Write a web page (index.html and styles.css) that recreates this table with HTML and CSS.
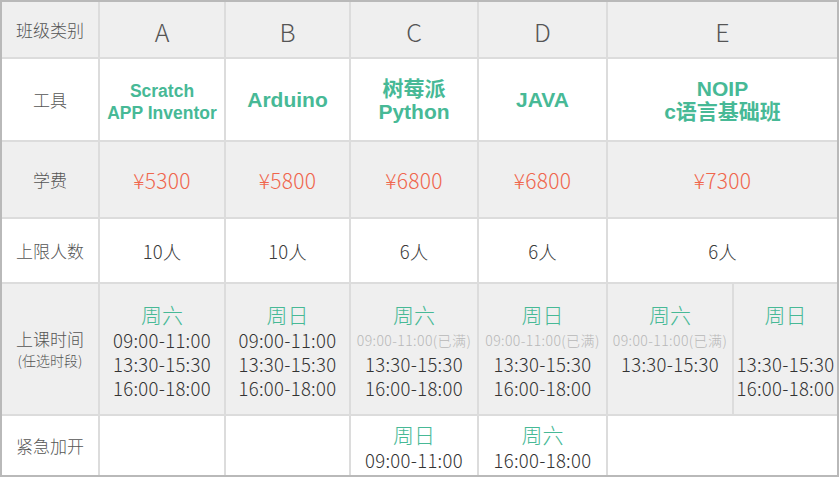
FILE: index.html
```html
<!DOCTYPE html>
<html lang="zh">
<head>
<meta charset="utf-8">
<title>班级类别</title>
<link rel="stylesheet" href="styles.css">
</head>
<body>
<div class="grid">
  <div class="c g head">班级类别</div>
  <div class="c g letter">A</div>
  <div class="c g letter">B</div>
  <div class="c g letter">C</div>
  <div class="c g letter">D</div>
  <div class="c g letter s2 end">E</div>

  <div class="c head">工具</div>
  <div class="c tool sm"><span>Scratch</span><span>APP Inventor</span></div>
  <div class="c tool"><span>Arduino</span></div>
  <div class="c tool two"><span>树莓派</span><span>Python</span></div>
  <div class="c tool"><span>JAVA</span></div>
  <div class="c tool two s2 end"><span>NOIP</span><span>c语言基础班</span></div>

  <div class="c g head">学费</div>
  <div class="c g price">¥5300</div>
  <div class="c g price">¥5800</div>
  <div class="c g price">¥6800</div>
  <div class="c g price">¥6800</div>
  <div class="c g price s2 end">¥7300</div>

  <div class="c head">上限人数</div>
  <div class="c num">10人</div>
  <div class="c num">10人</div>
  <div class="c num">6人</div>
  <div class="c num">6人</div>
  <div class="c num s2 end">6人</div>

  <div class="c g head"><span>上课时间</span><span class="note">(任选时段)</span></div>
  <div class="c g sched"><span class="day">周六</span><span class="t">09:00-11:00</span><span class="t">13:30-15:30</span><span class="t">16:00-18:00</span></div>
  <div class="c g sched"><span class="day">周日</span><span class="t">09:00-11:00</span><span class="t">13:30-15:30</span><span class="t">16:00-18:00</span></div>
  <div class="c g sched"><span class="day">周六</span><span class="t full">09:00-11:00(已满)</span><span class="t">13:30-15:30</span><span class="t">16:00-18:00</span></div>
  <div class="c g sched"><span class="day">周日</span><span class="t full">09:00-11:00(已满)</span><span class="t">13:30-15:30</span><span class="t">16:00-18:00</span></div>
  <div class="c g sched"><span class="day">周六</span><span class="t full">09:00-11:00(已满)</span><span class="t">13:30-15:30</span></div>
  <div class="c g sched end"><span class="day">周日</span><span class="t blank"></span><span class="t">13:30-15:30</span><span class="t">16:00-18:00</span></div>

  <div class="c head last">紧急加开</div>
  <div class="c last"></div>
  <div class="c last"></div>
  <div class="c extra last"><span class="day">周日</span><span class="t">09:00-11:00</span></div>
  <div class="c extra last"><span class="day">周六</span><span class="t">16:00-18:00</span></div>
  <div class="c last s2 end"></div>
</div>
</body>
</html>
```

FILE: styles.css
```css
html, body {
  margin: 0;
  padding: 0;
  background: #ffffff;
}

.grid {
  box-sizing: border-box;
  width: 839px;
  height: 477px;
  border: 2px solid #b9b9b9;
  display: grid;
  grid-template-columns: 98px 126px 125px 128px 129px 126px 103px;
  grid-template-rows: 57px 83px 77px 65px 132px 59px;
  font-family: "Noto Sans CJK SC", "Noto Sans", sans-serif;
  font-weight: 300;
  color: #4a4a4a;
  background: #ffffff;
}

.c {
  box-sizing: border-box;
  border-right: 2px solid #dcdcdc;
  border-bottom: 2px solid #dcdcdc;
  display: flex;
  flex-direction: column;
  align-items: center;
  justify-content: center;
  text-align: center;
  white-space: nowrap;
}

.g {
  background: #efefef;
}

.end {
  border-right: none;
}

.last {
  border-bottom: none;
}

.s2 {
  grid-column: span 2;
}

.head {
  font-size: 17px;
  line-height: 22px;
  color: #555555;
}

.note {
  font-size: 14px;
  line-height: 20px;
}

.letter {
  font-size: 25px;
  padding-top: 3px;
  color: #555555;
}

.tool {
  font-family: "Liberation Sans", "Noto Sans CJK SC", sans-serif;
  font-weight: 700;
  font-size: 21px;
  line-height: 23px;
  color: #47b996;
}

.tool.sm {
  font-size: 17.5px;
  line-height: 22px;
  padding-top: 4px;
}

.price {
  font-size: 21px;
  letter-spacing: 0.3px;
  color: #f0664d;
}

.num {
  font-size: 18.5px;
  color: #3a3a3a;
}

.sched {
  justify-content: flex-start;
  padding-top: 16px;
}

.day {
  font-size: 21px;
  line-height: 28px;
  color: #47b996;
}

.t {
  font-size: 18.5px;
  line-height: 24px;
  letter-spacing: 0.3px;
  color: #333333;
}

.t.full {
  font-size: 14px;
  letter-spacing: 0.4px;
  color: #b8b8b8;
}

.t.blank {
  height: 24px;
}

.extra {
  justify-content: center;
}
```
